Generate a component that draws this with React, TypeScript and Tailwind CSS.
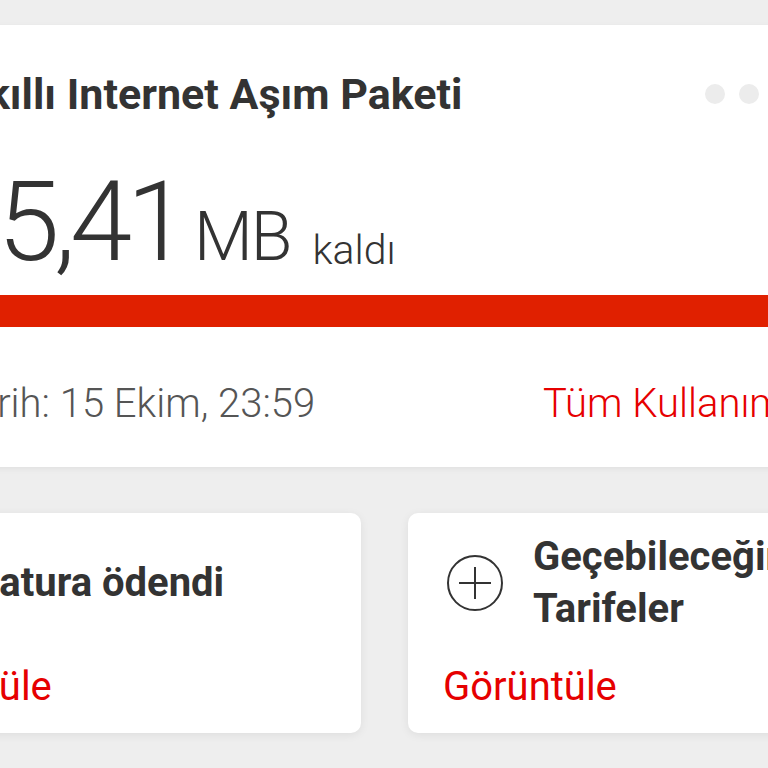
function PlusCircle() {
  return (
    <svg width="60" height="60" viewBox="0 0 60 60" fill="none" stroke="#333" strokeWidth="2">
      <circle cx="30" cy="30" r="27" />
      <path d="M30 14v32M14 30h32" />
    </svg>
  );
}

function CheckCircle() {
  return (
    <svg width="60" height="60" viewBox="0 0 60 60" fill="none" stroke="#333" strokeWidth="2">
      <circle cx="30" cy="30" r="27" />
      <path d="M18 31l8 8 16-17" />
    </svg>
  );
}

function ActionCard({
  icon,
  title,
  titleClass,
}: {
  icon: React.ReactNode;
  title: React.ReactNode;
  titleClass?: string;
}) {
  return (
    <div className="w-[518px] h-[220px] shrink-0 bg-white rounded-[10px] shadow-[0_2px_10px_rgba(0,0,0,0.07)] pl-[35px] pt-[18px] flex flex-col">
      <div className="h-[104px] flex items-center gap-[28px]">
        <div className="ml-[2px] shrink-0">{icon}</div>
        <div className={"text-[40px] font-bold leading-[52px] text-[#333] whitespace-nowrap " + (titleClass ?? "")}>
          {title}
        </div>
      </div>
      <div className="mt-[29px] text-[40px] leading-[46px] text-[#e60000]">Görüntüle</div>
    </div>
  );
}

export default function App() {
  return (
    <div className="w-[768px] h-[768px] overflow-hidden bg-[#eeeeee] font-['Roboto',sans-serif]">
      <div className="h-[25px]" />

      <section className="-ml-[60px] w-[880px] h-[442px] bg-white shadow-[0_2px_6px_rgba(0,0,0,0.06)] flex flex-col">
        <div className="mt-[49px] h-[40px] pl-[18px] pr-[61px] flex items-center justify-between">
          <h2 className="text-[43px] font-bold leading-none text-[#333] whitespace-nowrap">
            Akıllı Internet Aşım Paketi
          </h2>
          <div className="flex gap-[14px]">
            <span className="w-[20px] h-[20px] rounded-full bg-[#ececec]" />
            <span className="w-[20px] h-[20px] rounded-full bg-[#ececec]" />
          </div>
        </div>

        <div className="mt-[52px] h-[112px] flex items-baseline text-[#333] whitespace-nowrap">
          <span className="ml-[1px] text-[112px] leading-none font-light tracking-[-0.05em]">
            25,41
          </span>
          <span className="ml-[11px] text-[68px] leading-none font-light tracking-[-0.03em]">MB</span>
          <span className="ml-[22px] translate-y-[4px] text-[41px] leading-none font-light">kaldı</span>
        </div>

        <div className="mt-[17px] h-[32px] bg-[#e02000]" />

        <div className="flex-1 pt-[13px] flex items-center text-[40px] font-light whitespace-nowrap">
          <span className="ml-[14px] w-[589px] shrink-0 text-[#555]">Tarih: 15 Ekim, 23:59</span>
          <span className="text-[#e60000]">Tüm Kullanımlar</span>
        </div>
      </section>

      <div className="mt-[46px] -ml-[157px] flex gap-[47px]">
        <ActionCard icon={<CheckCircle />} title="Fatura ödendi" titleClass="ml-[10px]" />
        <ActionCard
          icon={<PlusCircle />}
          title={
            <>
              Geçebileceğin
              <br />
              Tarifeler
            </>
          }
        />
      </div>
    </div>
  );
}
